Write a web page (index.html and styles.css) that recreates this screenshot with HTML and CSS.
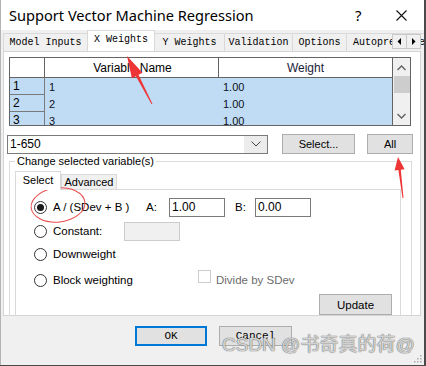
FILE: index.html
```html
<!DOCTYPE html>
<html>
<head>
<meta charset="utf-8">
<link rel="stylesheet" href="styles.css">
</head>
<body>
<div class="window">
  <div class="titlebar">
    <span class="title">Support Vector Machine Regression</span>
    <span class="help">?</span>
    <svg class="close" width="11" height="11" viewBox="0 0 11 11"><path d="M0.5 0.5 L10.5 10.5 M10.5 0.5 L0.5 10.5" stroke="#111" stroke-width="1.1" fill="none"/></svg>
  </div>

  <div class="tabstrip">
    <div class="tab t1">Model Inputs</div>
    <div class="tab sel t2">X Weights</div>
    <div class="tab t3">Y Weights</div>
    <div class="tab t4">Validation</div>
    <div class="tab t5">Options</div>
    <div class="tab t6">Autopreprocess</div>
    <div class="tabscroll">
      <div class="tsbtn"><svg width="5" height="7" viewBox="0 0 5 7"><path d="M4 0 L4 7 L0.5 3.5 Z" fill="#000"/></svg></div>
      <div class="tsbtn"><svg width="5" height="7" viewBox="0 0 5 7"><path d="M1 0 L1 7 L4.5 3.5 Z" fill="#000"/></svg></div>
    </div>
  </div>

  <div class="panel">
    <div class="grid">
      <div class="hcell hnum"></div>
      <div class="hcell hname">Variable Name</div>
      <div class="hcell hweight">Weight</div>
      <div class="vscroll">
        <svg class="sup" width="9" height="6" viewBox="0 0 9 6"><path d="M0.5 5 L4.5 1 L8.5 5" stroke="#606060" stroke-width="1.3" fill="none"/></svg>
        <div class="thumb"></div>
        <svg class="sdown" width="9" height="6" viewBox="0 0 9 6"><path d="M0.5 1 L4.5 5 L8.5 1" stroke="#606060" stroke-width="1.3" fill="none"/></svg>
      </div>
      <div class="num">1</div><div class="dcell">1</div><div class="dcell">1.00</div>
      <div class="num">2</div><div class="dcell">2</div><div class="dcell">1.00</div>
      <div class="num">3</div><div class="dcell">3</div><div class="dcell">1.00</div>
    </div>

    <div class="toolrow">
      <div class="combo">
        <span class="combotext">1-650</span>
        <span class="combodrop"><svg width="10" height="6" viewBox="0 0 10 6"><path d="M0.5 0.5 L5 5 L9.5 0.5" stroke="#444" stroke-width="1" fill="none"/></svg></span>
      </div>
      <div class="btn btn-select">Select...</div>
      <div class="btn btn-all">All</div>
    </div>

    <fieldset class="group">
      <legend>Change selected variable(s)</legend>
      <div class="itabs">
        <div class="itab isel">Select</div>
        <div class="itab">Advanced</div>
      </div>
      <div class="ipanel">
        <div class="row r1">
          <span class="radio on"></span>
          <span class="lbl lbl-a">A / (SDev + B )</span>
          <span class="lbl-k">A:</span>
          <span class="input">1.00</span>
          <span class="lbl-k lbl-b">B:</span>
          <span class="input">0.00</span>
        </div>
        <div class="row r2">
          <span class="radio"></span>
          <span class="lbl lbl-c">Constant:</span>
          <span class="input disabled"></span>
        </div>
        <div class="row r3">
          <span class="radio"></span>
          <span class="lbl">Downweight</span>
        </div>
        <div class="row r4">
          <span class="radio"></span>
          <span class="lbl lbl-bw">Block weighting</span>
          <span class="check"></span>
          <span class="lbl-dis">Divide by SDev</span>
        </div>
        <div class="btn btn-update">Update</div>
      </div>
    </fieldset>
  </div>

  <div class="footer">
    <div class="btn mono ok">OK</div>
    <div class="btn mono cancel">Cancel</div>
  </div>

  <div class="watermark">CSDN @书奇真的荷@</div>
  <svg class="grip" width="8" height="8" viewBox="0 0 8 8">
    <rect x="6" y="0" width="1.5" height="1.5" fill="#aaa"/>
    <rect x="3" y="3" width="1.5" height="1.5" fill="#aaa"/>
    <rect x="6" y="3" width="1.5" height="1.5" fill="#aaa"/>
    <rect x="0" y="6" width="1.5" height="1.5" fill="#aaa"/>
    <rect x="3" y="6" width="1.5" height="1.5" fill="#aaa"/>
    <rect x="6" y="6" width="1.5" height="1.5" fill="#aaa"/>
  </svg>
</div>

<svg class="annot" width="426" height="366" viewBox="0 0 426 366">
  <polygon points="127,56 142.5,72.7 138.5,74.8 152.4,103.8 151.6,104.2 135.9,76.2 131.9,78.3" fill="#ee3535"/>
  <polygon points="398,157 404.6,169.3 400.8,169.8 403.5,197.9 402.5,198.1 398.4,170 394.6,170.5" fill="#ee3535"/>
  <ellipse cx="58" cy="205" rx="27" ry="17" transform="rotate(-6 58 205)" fill="none" stroke="#e84a4a" stroke-width="1"/>
</svg>
</body>
</html>
```
FILE: styles.css
```css
* { box-sizing: border-box; }
body {
  margin: 0;
  width: 426px;
  height: 366px;
  overflow: hidden;
  background: #4a4a4a;
  font-family: "Liberation Sans", Arial, sans-serif;
  font-size: 11px;
  color: #000;
}
.window {
  position: relative;
  width: 424px;
  height: 365px;
  background: #f0f0f0;
  border-left: 1px solid #b4b4b4;
  overflow: hidden;
  display: flex;
  flex-direction: column;
}
.titlebar {
  height: 30px;
  flex: none;
  background: #fff;
  display: flex;
  align-items: center;
  padding-left: 8px;
}
.title {
  font-family: "Noto Sans", sans-serif;
  font-size: 14.6px;
  color: #000;
  width: 346px;
}
.help {
  font-family: "Noto Sans", sans-serif;
  font-size: 15px;
  width: 41px;
}
.close { display: block; }

/* outer tab strip */
.tabstrip {
  position: relative;
  height: 21px;
  flex: none;
  display: flex;
  align-items: flex-end;
  padding-left: 2px;
  overflow: hidden;
  font-family: "Liberation Mono", "Courier New", monospace;
  font-size: 10px;
}
.tab {
  height: 18px;
  flex: none;
  background: #f0f0f0;
  border: 1px solid #d9d9d9;
  border-bottom: none;
  margin-right: -1px;
  display: flex;
  align-items: center;
  justify-content: center;
  white-space: nowrap;
  overflow: hidden;
}
.t1 { width: 85px; }
.t2 { width: 68px; }
.t3 { width: 71px; }
.t4 { width: 69px; }
.t5 { width: 55px; }
.t6 { width: 80px; justify-content: flex-start; padding-left: 6px; }
.tab.sel {
  background: #fff;
  position: relative;
  z-index: 2;
  margin-bottom: -1px;
  height: 22px;
  align-items: flex-start;
  padding-top: 3px;
}
.tabscroll {
  position: absolute;
  left: 392px;
  top: 4px;
  display: flex;
  z-index: 3;
}
.tsbtn {
  width: 15px;
  height: 15px;
  background: #f0f0f0;
  border: 1px solid #c8c8c8;
  margin-left: -1px;
  display: flex;
  align-items: center;
  justify-content: center;
}

/* outer panel */
.panel {
  width: 418px;
  height: 265px;
  flex: none;
  margin-left: 2px;
  background: #fff;
  border: 1px solid #d4d4d4;
  overflow: hidden;
  display: flex;
  flex-direction: column;
}

/* grid */
.grid {
  margin: 5px 0 0 5px;
  width: 402px;
  height: 69px;
  flex: none;
  border: 1px solid #646464;
  display: grid;
  grid-template-columns: 35px 174px 174px 17px;
  grid-template-rows: 20px 17px 17px 17px;
  overflow: hidden;
  font-size: 11px;
}
.hcell {
  background: #fff;
  border-bottom: 1px solid #646464;
  display: flex;
  align-items: center;
  justify-content: center;
  font-size: 12px;
}
.hnum, .hname { border-right: 1px solid #646464; }
.hname { padding-left: 2px; }
.hweight { color: #1c1c3c; border-right: 1px solid #646464; }
.vscroll {
  grid-column: 4;
  grid-row: 1 / 5;
  background: #f0f0f0;
  display: flex;
  flex-direction: column;
  align-items: center;
  padding-top: 7px;
}
.sup { display: block; }
.thumb {
  margin-top: 5px;
  width: 16px;
  height: 17px;
  background: #cdcdcd;
}
.sdown { display: block; margin-top: 20px; }
.num {
  background: #bfdcf4;
  border-right: 1px solid #7a7a7a;
  border-bottom: 1px solid #7a7a7a;
  padding-left: 3px;
  display: flex;
  align-items: center;
  font-size: 12px;
}
.dcell {
  background: #bfdcf4;
  padding-left: 4px;
  display: flex;
  align-items: center;
  font-size: 11px;
  color: #101020;
}
.dcell:nth-child(3n+7) { border-right: 1px solid #646464; }

/* combo row */
.toolrow {
  margin-top: 8px;
  height: 20px;
  flex: none;
  display: flex;
  align-items: center;
  padding-left: 3px;
}
.combo {
  width: 261px;
  height: 19px;
  border: 1px solid #7a7a7a;
  background: #fff;
  display: flex;
}
.combotext {
  flex: 1;
  padding-left: 2px;
  display: flex;
  align-items: center;
  font-size: 12px;
}
.combodrop {
  width: 23px;
  background: #ececec;
  display: flex;
  align-items: center;
  justify-content: center;
}
.btn {
  background: #e1e1e1;
  border: 1px solid #adadad;
  display: flex;
  align-items: center;
  justify-content: center;
  font-size: 11px;
  flex: none;
}
.btn-select { width: 73px; height: 20px; margin-left: 14px; }
.btn-all { width: 46px; height: 20px; margin-left: 12px; }

/* group box */
.group {
  margin: 1px 0 0 5px;
  width: 403px;
  height: 200px;
  flex: none;
  border: 1px solid #dcdcdc;
  padding: 0 10px 0 5px;
  min-width: 0;
}
.group legend {
  padding: 0 2px;
  font-size: 11px;
  line-height: 13px;
}
.itabs {
  margin-top: 3px;
  height: 18px;
  display: flex;
  align-items: flex-end;
}
.itab {
  height: 15px;
  padding: 0 5px;
  width: 56px;
  background: #f0f0f0;
  border: 1px solid #d9d9d9;
  border-bottom: none;
  display: flex;
  align-items: center;
  justify-content: center;
  font-size: 11px;
}
.itab.isel {
  width: 46px;
  height: 19px;
  margin-bottom: -1px;
  background: #fff;
  position: relative;
  z-index: 2;
  align-items: flex-start;
  padding-top: 2px;
}
.ipanel {
  height: 160px;
  border: 1px solid #d9d9d9;
  background: #fff;
  display: flex;
  flex-direction: column;
  padding: 7px 0 0 18px;
}
.row {
  height: 20px;
  display: flex;
  align-items: center;
}
.r2 { margin-top: 4px; }
.r3 { margin-top: 3px; }
.r4 { margin-top: 6px; }
.radio {
  width: 13px;
  height: 13px;
  border: 1px solid #333;
  border-radius: 50%;
  background: #fff;
  flex: none;
  display: flex;
  align-items: center;
  justify-content: center;
  margin-right: 6px;
}
.radio.on::after {
  content: "";
  width: 7px;
  height: 7px;
  border-radius: 50%;
  background: #1a1a1a;
}
.lbl { font-size: 11.5px; }
.lbl-a { width: 93px; }
.lbl-c { width: 71px; }
.lbl-bw { width: 145px; }
.lbl-k { width: 23px; font-size: 11.5px; }
.lbl-b { width: 20px; margin-left: 10px; }
.input {
  width: 56px;
  height: 19px;
  border: 1px solid #7a7a7a;
  background: #fff;
  padding-left: 2px;
  display: flex;
  align-items: center;
  font-size: 12px;
}
.input.disabled {
  background: #f0f0f0;
  border-color: #cccccc;
}
.check {
  width: 13px;
  height: 13px;
  border: 1px solid #cccccc;
  background: #fff;
  margin-right: 5px;
  margin-top: -7px;
}
.lbl-dis { color: #6d6d6d; font-size: 11.5px; }
.btn-update {
  align-self: flex-end;
  margin-top: 4px;
  margin-right: 8px;
  width: 73px;
  height: 21px;
  font-size: 11.5px;
}

/* footer */
.footer {
  flex: 1;
  display: flex;
  padding: 10px 0 0 134px;
  gap: 12px;
}
.mono {
  font-family: "Liberation Mono", "Courier New", monospace;
  font-size: 11px;
}
.ok {
  width: 72px;
  height: 20px;
  border: 2px solid #0078d7;
}
.cancel { width: 73px; height: 20px; }

.watermark {
  position: absolute;
  left: 221px;
  top: 333px;
  font-family: "Liberation Sans", "Noto Sans CJK SC", sans-serif;
  font-size: 19px;
  line-height: 24px;
  color: rgba(240, 240, 240, 0.8);
  text-shadow: 0 0 1px #666, 0 0 1px #666;
  white-space: nowrap;
}
.grip {
  position: absolute;
  right: 2px;
  bottom: 2px;
}
.annot {
  position: absolute;
  left: 0;
  top: 0;
  pointer-events: none;
}
```
